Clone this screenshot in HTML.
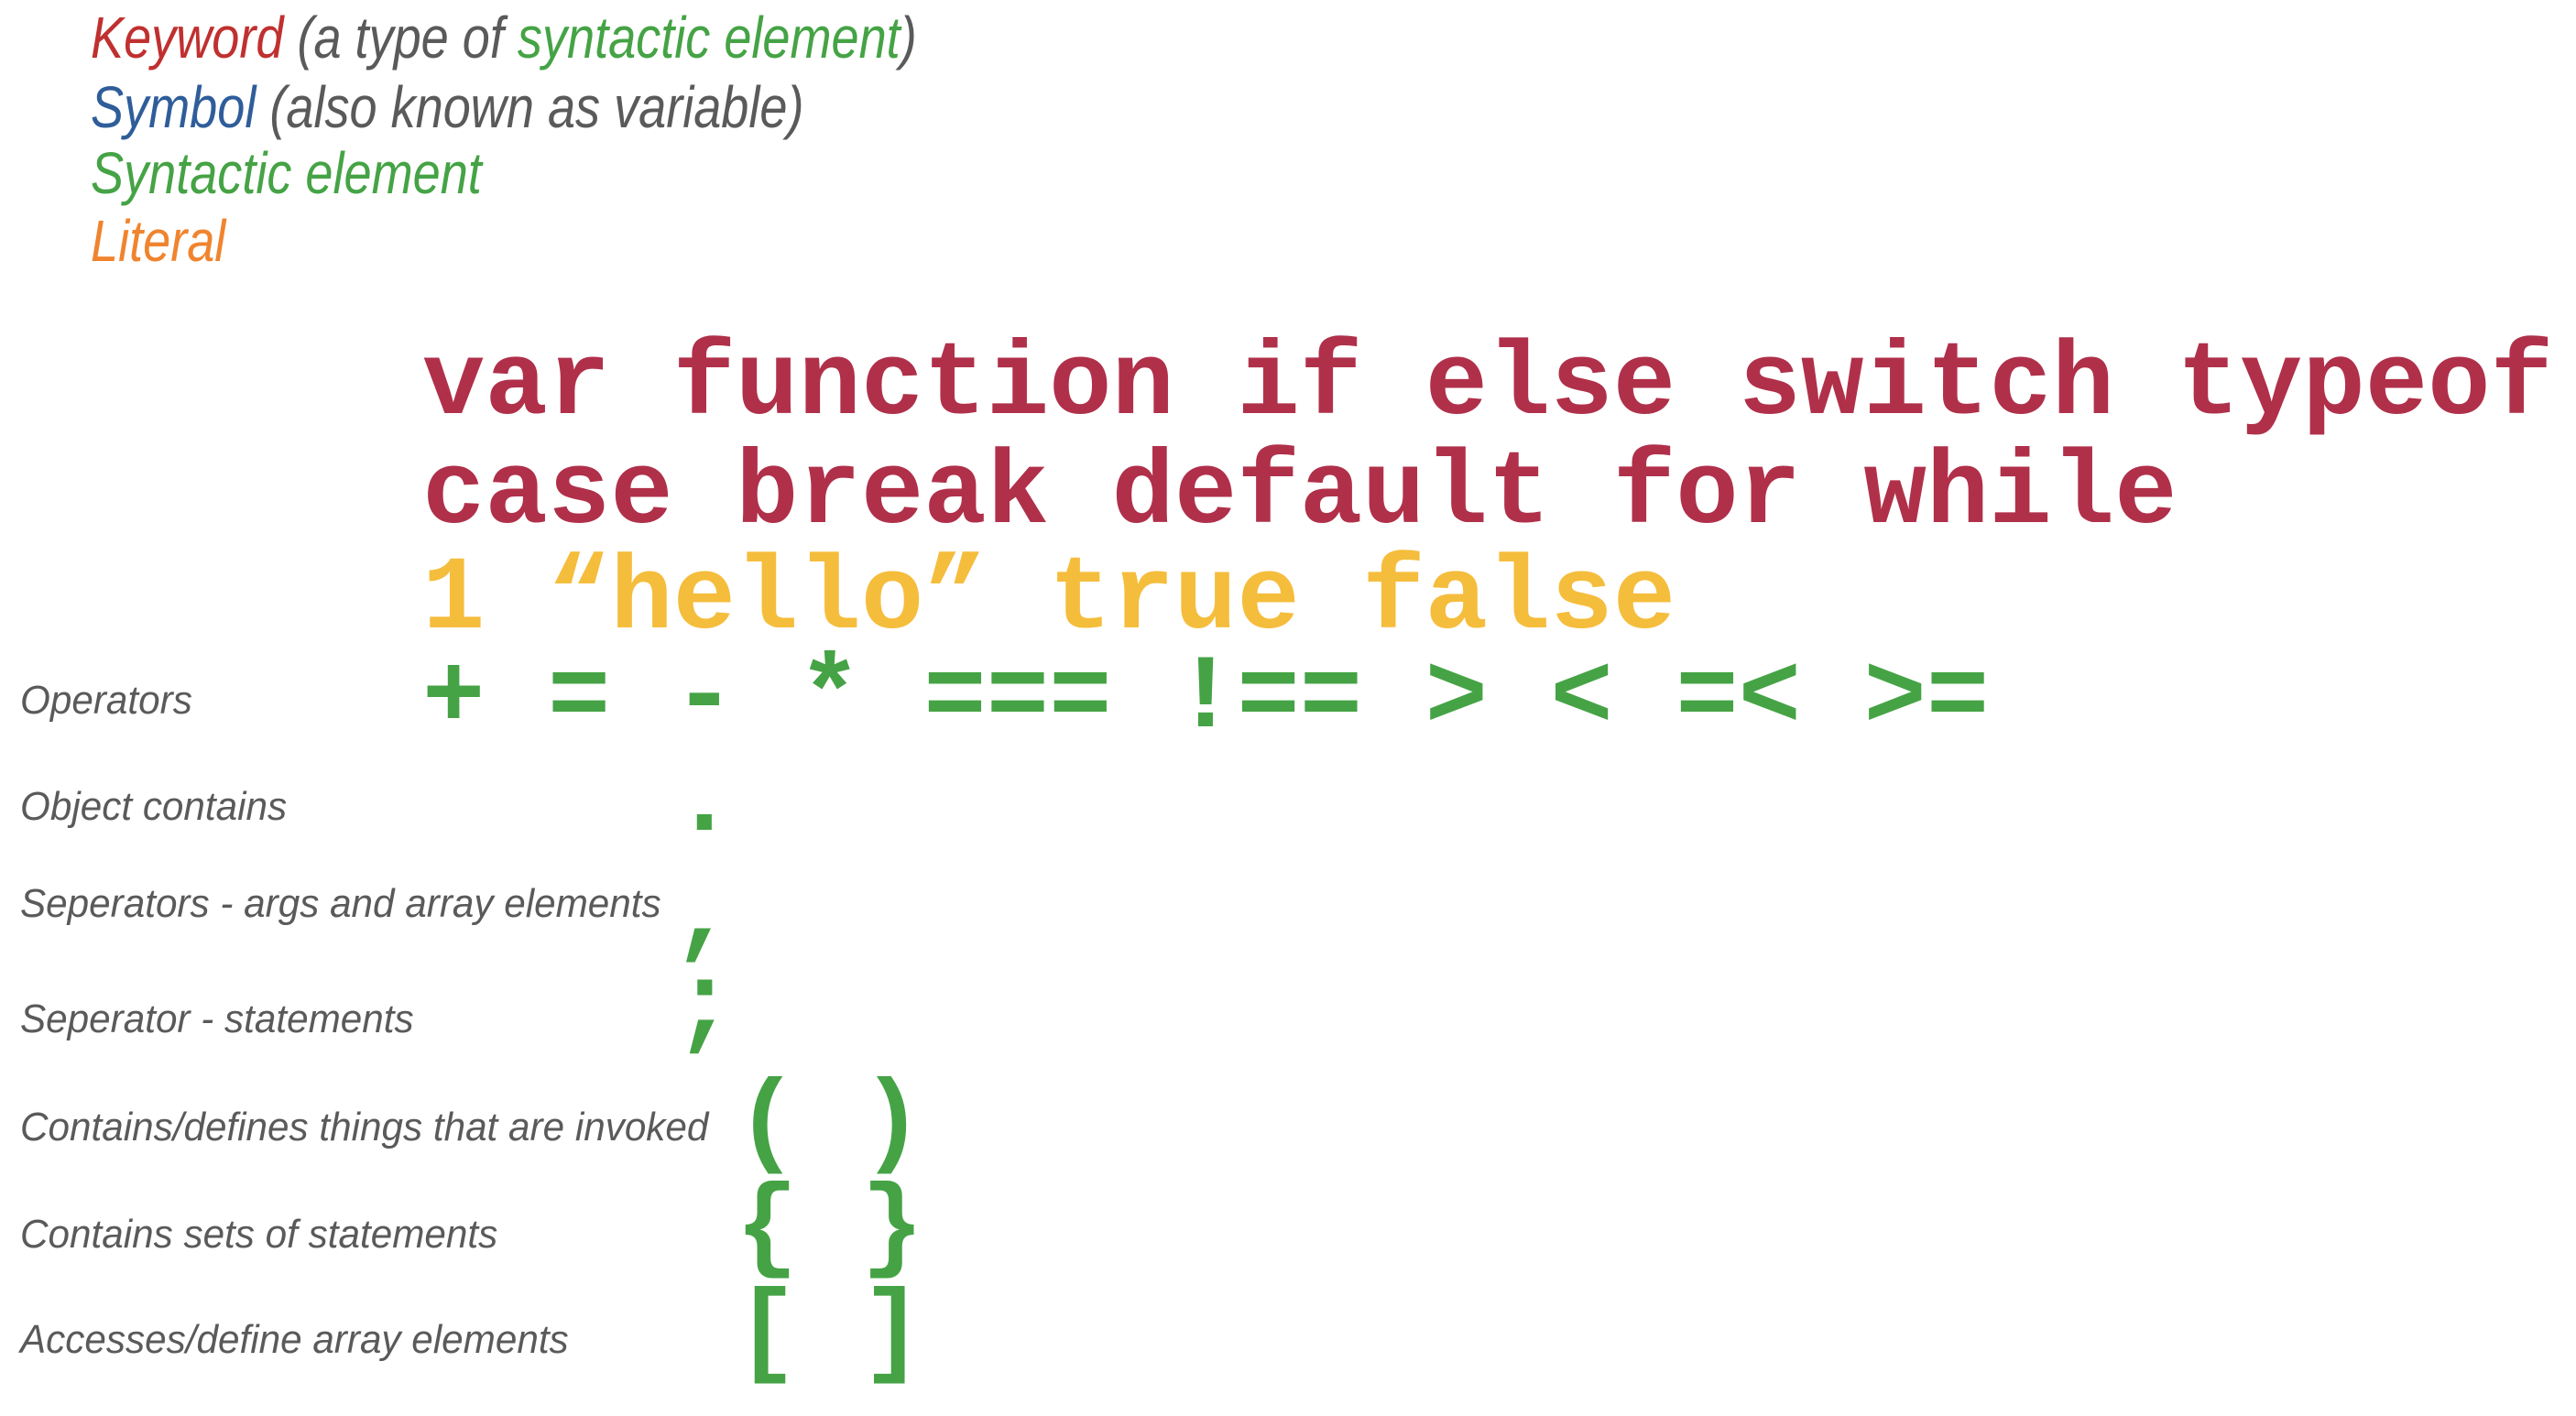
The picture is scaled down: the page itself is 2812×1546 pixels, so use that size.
<!DOCTYPE html>
<html><head><meta charset="utf-8"><style>
html,body{margin:0;padding:0;background:#fff;width:2812px;height:1546px;overflow:hidden;position:relative}
.a{position:absolute;white-space:pre;line-height:1}
.lg{font-family:"Liberation Sans",sans-serif;font-style:italic;font-size:64px;transform:scaleX(0.845);transform-origin:0 0;left:99px}
.lb{font-family:"Liberation Sans",sans-serif;font-style:italic;font-size:44px;color:#5a5a5a;transform:scaleX(0.96);transform-origin:0 0;left:22px}
.c{font-family:"Liberation Mono",monospace;font-weight:bold;font-size:114px;left:461px}
.r{color:#b0304a}.y{color:#f5bd3c}.g{color:#45a345}
</style></head><body>
<div class="a lg" style="top:9px"><span style="color:#c0302f">Keyword</span><span style="color:#5a5a5a"> (a type of </span><span style="color:#45a345">syntactic element</span><span style="color:#5a5a5a">)</span></div>
<div class="a lg" style="top:85px"><span style="color:#2f5d9a">Symbol</span><span style="color:#5a5a5a"> (also known as variable)</span></div>
<div class="a lg" style="top:157px;color:#45a345">Syntactic element</div>
<div class="a lg" style="top:231px;color:#f0842e">Literal</div>

<div class="a c r" style="top:365px">var function if else switch typeof</div>
<div class="a c r" style="top:484px">case break default for while</div>
<div class="a c y" style="top:599px">1 “hello” true false</div>
<div class="a c g" style="top:707px">+ = - * === !== &gt; &lt; =&lt; &gt;=</div>
<div class="a c g" style="top:820px">    .</div>
<div class="a c g" style="top:944px">    ,</div>
<div class="a c g" style="top:1044px">    ;</div>
<div class="a c g" style="top:1172px">     ( )</div>
<div class="a c g" style="top:1286px">     { }</div>
<div class="a c g" style="top:1401px">     [ ]</div>

<div class="a lb" style="top:743px">Operators</div>
<div class="a lb" style="top:859px">Object contains</div>
<div class="a lb" style="top:965px">Seperators - args and array elements</div>
<div class="a lb" style="top:1091px">Seperator - statements</div>
<div class="a lb" style="top:1209px">Contains/defines things that are invoked</div>
<div class="a lb" style="top:1326px">Contains sets of statements</div>
<div class="a lb" style="top:1441px">Accesses/define array elements</div>
</body></html>
